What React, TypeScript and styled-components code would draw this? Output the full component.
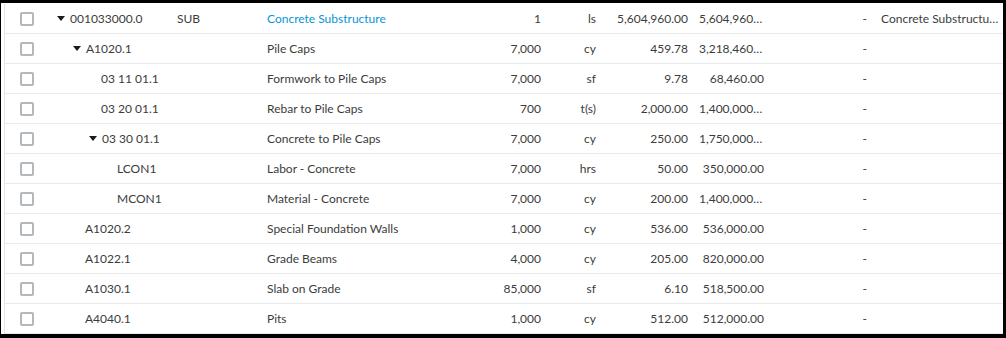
import styled, { createGlobalStyle } from 'styled-components';

const GlobalStyle = createGlobalStyle`
    html, body {
        margin: 0;
        padding: 0;
        background: #000;
    }
    body {
        font-family: Lato, "Noto Sans", sans-serif;
    }
`;

interface IRow {
    level: number;
    caret?: boolean;
    code: string;
    type?: string;
    desc: string;
    link?: boolean;
    qty: string;
    unit: string;
    price: string;
    total: string;
    note?: string;
}

const rows: IRow[] = [
    { level: 0, caret: true, code: '001033000.0', type: 'SUB', desc: 'Concrete Substructure', link: true, qty: '1', unit: 'ls', price: '5,604,960.00', total: '5,604,960.00', note: 'Concrete Substructure' },
    { level: 1, caret: true, code: 'A1020.1', desc: 'Pile Caps', qty: '7,000', unit: 'cy', price: '459.78', total: '3,218,460.00' },
    { level: 2, code: '03 11 01.1', desc: 'Formwork to Pile Caps', qty: '7,000', unit: 'sf', price: '9.78', total: '68,460.00' },
    { level: 2, code: '03 20 01.1', desc: 'Rebar to Pile Caps', qty: '700', unit: 't(s)', price: '2,000.00', total: '1,400,000.00' },
    { level: 2, caret: true, code: '03 30 01.1', desc: 'Concrete to Pile Caps', qty: '7,000', unit: 'cy', price: '250.00', total: '1,750,000.00' },
    { level: 3, code: 'LCON1', desc: 'Labor - Concrete', qty: '7,000', unit: 'hrs', price: '50.00', total: '350,000.00' },
    { level: 3, code: 'MCON1', desc: 'Material - Concrete', qty: '7,000', unit: 'cy', price: '200.00', total: '1,400,000.00' },
    { level: 1, code: 'A1020.2', desc: 'Special Foundation Walls', qty: '1,000', unit: 'cy', price: '536.00', total: '536,000.00' },
    { level: 1, code: 'A1022.1', desc: 'Grade Beams', qty: '4,000', unit: 'cy', price: '205.00', total: '820,000.00' },
    { level: 1, code: 'A1030.1', desc: 'Slab on Grade', qty: '85,000', unit: 'sf', price: '6.10', total: '518,500.00' },
    { level: 1, code: 'A4040.1', desc: 'Pits', qty: '1,000', unit: 'cy', price: '512.00', total: '512,000.00' },
];

const Frame = styled.div`
    width: 1006px;
    height: 338px;
    box-sizing: border-box;
    background: #000;
    padding: 3px 3px 0 1px;
`;

const Table = styled.div`
    background: #fff;
    padding: 1px 0 0 3px;
`;

const Body = styled.div`
    border-left: 1px solid #e2e4e6;
`;

const Row = styled.div`
    display: grid;
    grid-template-columns: 44px 120px 90px 212px 78px 55px 92px 73px 106px 1fr;
    height: 30px;
    box-sizing: border-box;
    border-bottom: 1px solid #e8e9eb;
    align-items: center;
    font-size: 12px;
    color: #3c3c3c;
`;

const Cell = styled.div<{ $align?: 'left' | 'right'; $pad?: string }>`
    padding: ${(p) => p.$pad ?? '0 8px'};
    white-space: nowrap;
    overflow: hidden;
    text-overflow: ellipsis;
    text-align: ${(p) => p.$align ?? 'left'};
`;

const CheckCell = styled.div`
    display: flex;
    justify-content: center;
`;

const Checkbox = styled.span`
    width: 14px;
    height: 14px;
    box-sizing: border-box;
    border: 2px solid #b3b8bd;
    border-radius: 2px;
    background: #fff;
`;

const CodeCell = styled.div<{ $level: number; $caret: boolean }>`
    display: flex;
    align-items: center;
    padding-left: ${(p) => 8 + p.$level * 16 + (p.$caret ? 0 : 12)}px;
    white-space: nowrap;
`;

const Caret = styled.span`
    width: 0;
    height: 0;
    border-left: 4px solid transparent;
    border-right: 4px solid transparent;
    border-top: 5px solid #1a1a1a;
    margin-right: 5px;
`;

const Link = styled.span`
    color: #0696d7;
`;

const App = () => {
    return (
        <Frame>
            <GlobalStyle />
            <Table>
                <Body>
                    {rows.map((r) => (
                        <Row key={r.code}>
                            <CheckCell>
                                <Checkbox />
                            </CheckCell>
                            <CodeCell $level={r.level} $caret={!!r.caret}>
                                {r.caret && <Caret />}
                                {r.code}
                            </CodeCell>
                            <Cell>{r.type}</Cell>
                            <Cell>{r.link ? <Link>{r.desc}</Link> : r.desc}</Cell>
                            <Cell $align='right'>{r.qty}</Cell>
                            <Cell $align='right'>{r.unit}</Cell>
                            <Cell $align='right'>{r.price}</Cell>
                            <Cell $align='right' $pad='0 5px 0 3px'>{r.total}</Cell>
                            <Cell $align='right'>-</Cell>
                            <Cell $pad='0 4px 0 6px'>{r.note}</Cell>
                        </Row>
                    ))}
                </Body>
            </Table>
        </Frame>
    );
}

export default App;
